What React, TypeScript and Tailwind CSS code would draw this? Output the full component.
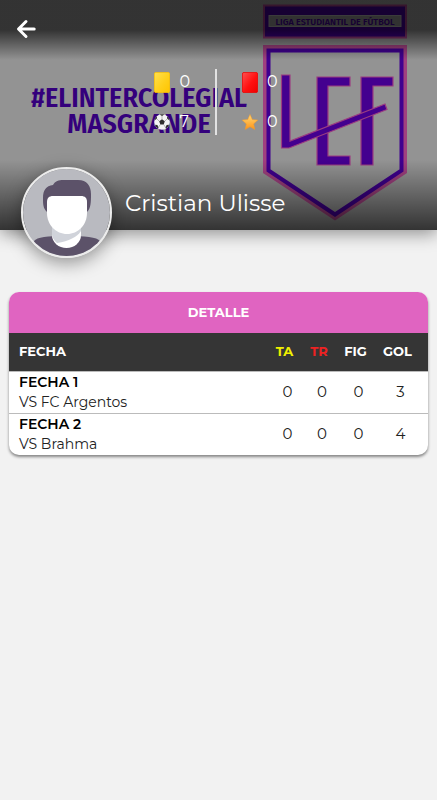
import type { ReactNode } from "react";

function BackIcon() {
  return (
    <svg width="20" height="20" viewBox="0 0 20 20" fill="none" stroke="#fff" strokeWidth="3" strokeLinecap="round" strokeLinejoin="round" aria-hidden="true">
      <path d="M10 2.5 2.5 10 10 17.5M3 10H18.2" />
    </svg>
  );
}

function CardIcon({ kind }: { kind: "yellow" | "red" }) {
  const id = `card-${kind}`;
  const [light, mid, dark] = kind === "yellow" ? ["#ffe04f", "#ffd01c", "#ffc400"] : ["#ff5050", "#ff1010", "#ee0000"];
  return (
    <svg width="16" height="21" viewBox="0 0 16 21" aria-hidden="true">
      <defs>
        <linearGradient id={id} x1="0" y1="0" x2="1" y2="1">
          <stop offset="0" stopColor={light} />
          <stop offset="0.55" stopColor={mid} />
          <stop offset="1" stopColor={dark} />
        </linearGradient>
      </defs>
      <rect x="0.4" y="0.4" width="15.2" height="20.2" rx="1.6" fill={`url(#${id})`} stroke={dark} strokeWidth="0.8" />
    </svg>
  );
}

function BallIcon() {
  return (
    <svg width="16" height="16" viewBox="0 0 16 16" aria-hidden="true">
      <circle cx="8" cy="8" r="7.8" fill="#f4f4f4" />
      <g fill="#2e2e2e">
        <path d="m8 5.2 2.8 2-1.1 3.3H6.3L5.2 7.2z" />
        <path d="M5.6 .6 8 2l2.4-1.4A7.8 7.8 0 0 0 5.6 .6z" />
        <path d="M13 2.1l.2 2.7 2.4 1.6A7.8 7.8 0 0 0 13 2.1z" />
        <path d="M3 2.1l-.2 2.7L.4 6.4A7.8 7.8 0 0 1 3 2.1z" />
        <path d="M15.2 10.8l-2.6.3-1.2 2.6.6.9a7.8 7.8 0 0 0 3.2-3.8z" />
        <path d="M.8 10.8l2.6.3 1.2 2.6-.6.9A7.8 7.8 0 0 1 .8 10.8z" />
      </g>
      <path d="M8 2v3.2M13.2 4.8l-2.4 2.4M2.8 4.8l2.4 2.4M9.7 10.5l1.7 2.6M6.3 10.5l-1.7 2.6" stroke="#777" strokeWidth="0.5" />
    </svg>
  );
}

function StarIcon() {
  return (
    <svg width="16" height="16" viewBox="0 0 16 16" aria-hidden="true">
      <defs>
        <linearGradient id="star" x1="0" y1="0" x2="0" y2="1">
          <stop offset="0" stopColor="#ffd978" />
          <stop offset="1" stopColor="#ff9416" />
        </linearGradient>
      </defs>
      <path d="m8 .4 2.300 5.100 5.500.6-4.100 3.800 1.100 5.600L8 12.800l-4.800 2.700 1.100-5.600L.2 6.100l5.500-.6z" fill="url(#star)" stroke="#f39a2c" strokeWidth="0.5" strokeLinejoin="round" />
    </svg>
  );
}

function Shield() {
  return (
    <svg className="shrink-0" width="146" height="220" viewBox="262 2 146 220" aria-hidden="true">
      <rect x="264" y="5.500" width="142" height="32" fill="#3f008f" stroke="#9c3d80" strokeWidth="2" />
      <rect x="269" y="15.500" width="132" height="11" fill="#8c8c8c" stroke="#a8a8a8" strokeWidth="1" />
      <text x="335" y="24.500" textAnchor="middle" fontSize="9" fontWeight="600" fill="#3f008f" fontFamily="'Fira Sans', 'Open Sans', sans-serif">
        LIGA ESTUDIANTIL DE FÚTBOL
      </text>
      <path d="M265 47H405V172L335 218 265 172z" fill="none" stroke="#a0407f" strokeWidth="4" />
      <path d="M268.500 50.500H401.500V170.500L335 214.500 268.500 170.500z" fill="none" stroke="#3f008f" strokeWidth="4" />
      <g fill="#44008f" stroke="#9c3d80" strokeWidth="1.200">
        <path d="M317 77H350V86H328V156H350V165H317z" />
        <path d="M361 77H393V86H373V165H361z" />
        <path d="M281.500 75H290V141L385 104 387 109.500 289 148H281.500z" />
      </g>
    </svg>
  );
}

function Avatar() {
  return (
    <svg className="block size-full" viewBox="0 0 87 87" role="img" aria-label="Cristian Ulisse">
      <rect width="87" height="87" fill="#b9bac0" />
      <path d="M11 72C14 68 24 67 43 67s31 1 34 5v15H11z" fill="#5c5269" />
      <path d="M29 56H58V66a14.500 13 0 0 1-29 0z" fill="#fff" />
      <path d="M29 56H58V62C54 68 46 72 34 74a13 13 0 0 1-5-8z" fill="#d0d3da" />
      <path d="M24 43c-4-4-4-8-4-14 0-8 3-12 10-13 2-4 6-5 10-5h15c9 0 13 6 13 14 0 8 0 14-4 18z" fill="#5c5269" />
      <path d="M24 33c0-4 2-6 6-6h28c4 0 6 2 6 6v11c0 12-9 21-20 21s-20-9-20-21z" fill="#fff" />
    </svg>
  );
}

function Stat({ label, value, children }: { label: string; value: number; children: ReactNode }) {
  return (
    <div className="flex h-6 items-center gap-[9px]" aria-label={label}>
      {children}
      <span className="text-base leading-6 text-white">{value}</span>
    </div>
  );
}

const matches = [
  { date: "FECHA 1", rival: "VS FC Argentos", stats: [0, 0, 0, 3] },
  { date: "FECHA 2", rival: "VS Brahma", stats: [0, 0, 0, 4] },
];

export default function App() {
  return (
    <div className="min-h-screen bg-[#f2f2f2] font-['Montserrat','Inter',sans-serif]">
      <header className="relative h-[230px] bg-[#939393] shadow-[0_4px_16px_rgba(0,0,0,0.4)]">
        <div className="absolute inset-0 flex justify-between overflow-hidden pt-[2px] pr-[29px] pl-[28px]">
          <p className="w-[222px] shrink-0 pt-[83px] text-center font-['Fira_Sans_Condensed','Roboto_Condensed','Roboto',sans-serif] text-[28px] leading-[26px] font-semibold whitespace-nowrap text-[#34007c]">
            #ELINTERCOLEGIAL
            <br />
            MASGRANDE
          </p>
          <Shield />
        </div>
        <div className="absolute inset-0 bg-[linear-gradient(to_bottom,#000000a6_0px,#000000a6_30px,#00000000_60px,#00000000_160px,#000000a6_230px)]" />

        <div className="relative flex h-full flex-col">
          <button type="button" aria-label="Volver" className="ml-4 mt-[19px] size-5 shrink-0">
            <BackIcon />
          </button>
          <div className="mt-[30px] flex h-[66px] shrink-0 items-center justify-center gap-[25px] pr-[5px]">
            <div className="flex flex-col gap-4">
              <Stat label="Tarjetas amarillas" value={0}><CardIcon kind="yellow" /></Stat>
              <Stat label="Goles" value={7}><BallIcon /></Stat>
            </div>
            <div className="h-full w-[2px] bg-[#e2e2e2]" />
            <div className="flex flex-col gap-4">
              <Stat label="Tarjetas rojas" value={0}><CardIcon kind="red" /></Stat>
              <Stat label="Figura" value={0}><StarIcon /></Stat>
            </div>
          </div>
          <div className="mt-8 flex shrink-0 items-start gap-[13px] pl-[21px]">
            <div className="size-[91px] shrink-0 overflow-hidden rounded-full border-2 border-[#ececec] shadow-[0_5px_18px_rgba(0,0,0,0.4)]">
              <Avatar />
            </div>
            <h1 className="pt-5 text-[23px] leading-8 font-normal text-white">Cristian Ulisse</h1>
          </div>
        </div>
      </header>

      <main className="px-[9px] pt-[62px]">
        <section className="overflow-hidden rounded-[10px] bg-white shadow-[0_2px_3px_rgba(0,0,0,0.45)]">
          <h2 className="bg-[#e064c1] text-center text-[13px] leading-[41px] font-bold text-white">DETALLE</h2>
          <table className="w-full table-fixed border-collapse">
            <colgroup>
              <col />
              <col className="w-[35px]" />
              <col className="w-[34px]" />
              <col className="w-[39px]" />
              <col className="w-[53px]" />
            </colgroup>
            <thead>
              <tr className="h-[38px] bg-[#353535] text-[13px] font-bold text-white">
                <th scope="col" className="pl-[10px] text-left">FECHA</th>
                <th scope="col" className="text-[#f0f000]">TA</th>
                <th scope="col" className="text-[#ee2222]">TR</th>
                <th scope="col">FIG</th>
                <th scope="col" className="pr-2">GOL</th>
              </tr>
            </thead>
            <tbody>
              {matches.map((m) => (
                <tr key={m.date} className="h-[42px] border-t border-[#bbbbbb]">
                  <th scope="row" className="pl-[10px] text-left text-sm leading-5 font-normal text-[#222222]">
                    <span className="block font-semibold text-black">{m.date}</span>
                    {m.rival}
                  </th>
                  {m.stats.map((n, i) => (
                    <td key={i} className="pl-[6px] text-center text-[15px] font-normal text-[#222222] last:pr-2">
                      {n}
                    </td>
                  ))}
                </tr>
              ))}
            </tbody>
          </table>
        </section>
      </main>
    </div>
  );
}
